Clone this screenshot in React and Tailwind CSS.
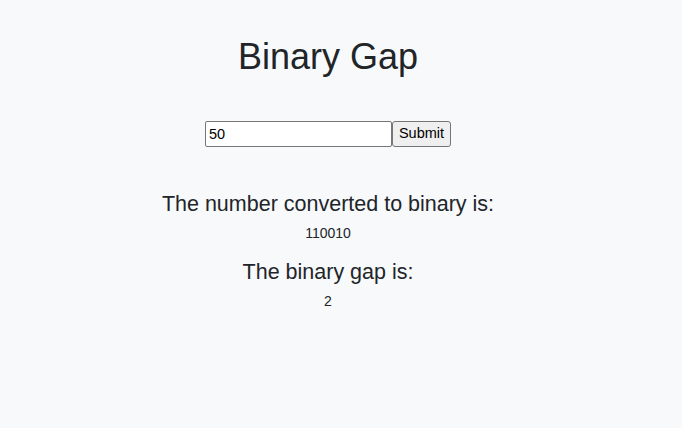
import React from "react";

export default function App() {
  return (
    <div className="min-h-[428px] w-full bg-[#f8f9fa] text-[#212529]" style={{ fontFamily: '"Liberation Sans", Arial, sans-serif' }}>
      <div className="w-[656px] flex flex-col items-center pt-[38.5px]">
        <h1 className="text-[36px] leading-[36px] font-normal">Binary Gap</h1>
        <form className="flex mt-[46.5px]" onSubmit={(e) => e.preventDefault()}>
          <input
            type="text"
            defaultValue="50"
            className="w-[187px] h-[26px] bg-white border border-[#767676] rounded-[2px] px-[3px] text-[14.5px] text-black outline-none"
            style={{ fontFamily: '"Liberation Sans", Arial, sans-serif' }}
          />
          <button
            type="submit"
            className="h-[26px] px-[6px] bg-[#efefef] border border-[#767676] rounded-[3px] text-[14.5px] text-black"
            style={{ fontFamily: '"Liberation Sans", Arial, sans-serif' }}
          >
            Submit
          </button>
        </form>
        <h3 className="mt-[46px] text-[21.5px] leading-[22px] font-normal">The number converted to binary is:</h3>
        <p className="mt-[11.3px] text-[14px] leading-[14px]">110010</p>
        <h3 className="mt-[20.3px] text-[21.5px] leading-[22px] font-normal">The binary gap is:</h3>
        <p className="mt-[11.4px] text-[14px] leading-[14px]">2</p>
      </div>
    </div>
  );
}
